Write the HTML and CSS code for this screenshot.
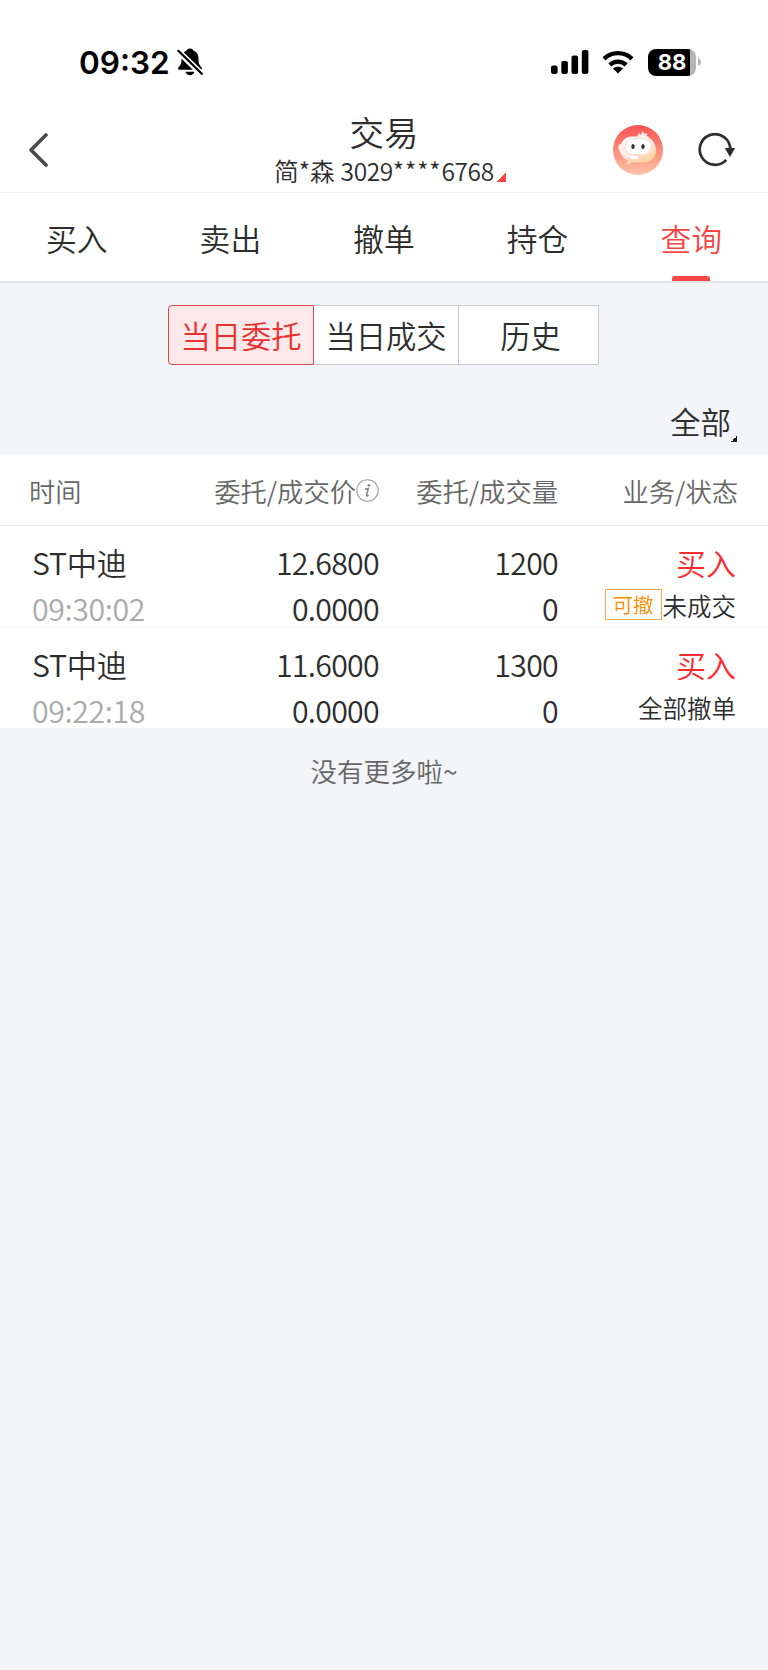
FILE: index.html
```html
<!DOCTYPE html>
<html lang="zh-CN">
<head>
  <meta charset="UTF-8" />
  <meta name="viewport" content="width=device-width, initial-scale=1.0"/>
  <title>交易</title>
  <link rel="stylesheet" href="styles.css">
</head>
<body>
  <div class="status-bar">
    <div class="clock">
      <span>09:32</span>
      <svg width="26" height="28" viewBox="0 0 26 28">
        <path d="M13 .5c1.800 0 3 .9 3.500 2.300 3.600 1.300 5 4.300 5 7.700 0 5 .8 6.500 3 8.800.8 1 .4 2.500-1 2.500H2.500c-1.400 0-1.800-1.500-1-2.500 2.200-2.300 3-3.800 3-8.800 0-3.400 1.400-6.400 5-7.700C10 1.400 11.200.5 13 .5z"/>
        <path d="M8.500 23.800h9c-.6 2.200-2.300 3.500-4.500 3.500s-3.900-1.300-4.500-3.500z"/>
        <path d="M.5 2.500L25 26.500" stroke="#fff" stroke-width="6"/>
        <path d="M1.300 2.800L24.800 25.800" stroke="#000" stroke-width="2.200" stroke-linecap="round"/>
      </svg>
    </div>
    <div class="signals">
      <svg class="bars" width="38" height="25" viewBox="0 0 38 25">
        <rect x="0" y="15.500" width="6.600" height="8.500" rx="2"/>
        <rect x="10.300" y="11" width="6.600" height="13" rx="2"/>
        <rect x="20.500" y="5.500" width="6.600" height="18.500" rx="2"/>
        <rect x="30.800" y="0" width="6.600" height="24" rx="2"/>
      </svg>
      <svg class="wifi" width="32" height="24" viewBox="0 0 32 24">
        <path d="M16 23.500l-5-5c2.800-2.500 7.200-2.500 10 0z"/>
        <path d="M7.800 14.800c4.700-4.300 11.700-4.300 16.400 0M2 8.800c7.900-7.600 20.100-7.600 28 0" fill="none" stroke="#000" stroke-width="4.400"/>
      </svg>
      <div class="battery"><span>88</span></div>
      <svg width="4" height="8" viewBox="0 0 4 8"><path d="M0 0c4 1.500 4 6.500 0 8z" fill="#b5b5b5"/></svg>
    </div>
  </div>

  <header class="header">
    <svg class="back" width="20" height="34" viewBox="0 0 20 34">
      <path d="M17 2L2 17l15 15" fill="none" stroke="#4a4a4a" stroke-width="3.600" stroke-linecap="round" stroke-linejoin="round"/>
    </svg>
    <div class="account">
      <h1>交易</h1>
      <div class="account-no">简*森 <span class="digits">3029<span class="stars">****</span>6768</span><i class="corner"></i></div>
    </div>
    <div class="actions">
      <svg width="50" height="50" viewBox="0 0 50 50">
        <defs>
          <linearGradient id="bg" x1="0" y1="0" x2="0" y2="1">
            <stop offset="0" stop-color="#f9524f"/>
            <stop offset="1" stop-color="#ffc3a8"/>
          </linearGradient>
          <linearGradient id="head" x1="0" y1="0" x2=".5" y2="1">
            <stop offset="0" stop-color="#fff"/>
            <stop offset=".6" stop-color="#ffe3da"/>
            <stop offset="1" stop-color="#ffd09a"/>
          </linearGradient>
        </defs>
        <circle cx="25" cy="25" r="25" fill="url(#bg)"/>
        <path d="M24 12l2-4 1.500 2L29.500 6l2 3 3-1-1 3 3 1-3 3z" fill="#ffe9e4"/>
        <path d="M18 11.500h14c7 1 11 7 11 14 0 8-5 12-12 12H20l-7 2.500 2-4.500c-5-2-7.500-6-8.500-10-2-2-1.500-6 1.500-6.500 1.500-4 5-7 10-7.500z" fill="url(#head)"/>
        <rect x="12" y="13.500" width="26" height="16" rx="8" fill="#fff" stroke="#ffe0d8"/>
        <ellipse cx="20" cy="21.500" rx="1.700" ry="2.600" fill="#33302f"/>
        <ellipse cx="30" cy="21.500" rx="1.700" ry="2.600" fill="#33302f"/>
        <path d="M8 25c2 4 6 6.500 14 7.500" fill="none" stroke="#fff" stroke-width="1.300"/>
        <rect x="18" y="31" width="7" height="3" rx="1.500" fill="#fff"/>
      </svg>
      <svg width="38" height="34" viewBox="0 0 38 34">
        <path d="M28.300 26.800A15.300 15.300 0 1 1 32.300 17" fill="none" stroke="#2d2d2d" stroke-width="2.700"/>
        <path d="M26.800 15h10.400l-5.200 9z" fill="#2d2d2d"/>
      </svg>
    </div>
  </header>

  <nav class="tabs">
    <a>买入</a>
    <a>卖出</a>
    <a>撤单</a>
    <a>持仓</a>
    <a class="active">查询</a>
  </nav>

  <div class="segments">
    <button class="selected">当日委托</button>
    <button>当日成交</button>
    <button>历史</button>
  </div>

  <div class="filter"><span>全部</span><i class="corner"></i></div>

  <div class="orders">
    <div class="order-head">
      <span>时间</span>
      <span class="price-head">委托/成交价<svg width="23" height="23" viewBox="0 0 23 23">
        <circle cx="11.500" cy="11.500" r="10.700" fill="none" stroke="#a0a0a0" stroke-width="1.100"/>
        <circle cx="12.800" cy="6.300" r="1.400" fill="#888"/>
        <path d="M9 10.300l3.300-.8-1.800 6.800c-.2.800.6.800 2.200-.5" fill="none" stroke="#888" stroke-width="1.600"/>
      </svg></span>
      <span>委托/成交量</span>
      <span>业务/状态</span>
    </div>

    <div class="order">
      <div class="cell">
        <div class="name">ST中迪</div>
        <div class="time">09:30:02</div>
      </div>
      <div class="cell"><div>12.6800</div><div>0.0000</div></div>
      <div class="cell"><div>1200</div><div>0</div></div>
      <div class="cell">
        <div class="side">买入</div>
        <div class="state"><span class="tag">可撤</span>未成交</div>
      </div>
    </div>

    <div class="order">
      <div class="cell">
        <div class="name">ST中迪</div>
        <div class="time">09:22:18</div>
      </div>
      <div class="cell"><div>11.6000</div><div>0.0000</div></div>
      <div class="cell"><div>1300</div><div>0</div></div>
      <div class="cell">
        <div class="side">买入</div>
        <div class="state">全部撤单</div>
      </div>
    </div>
  </div>

  <p class="no-more">没有更多啦~</p>
</body>
</html>
```
FILE: styles.css
```css
* {
  box-sizing: border-box;
}

body {
  margin: 0;
  min-height: 1670px;
  background-color: #f3f5f9;
  color: #2d2d2d;
  font-family: "Noto Sans CJK SC", sans-serif;
  font-weight: 350;
}

svg {
  display: block;
  flex: none;
}

.status-bar {
  display: flex;
  justify-content: space-between;
  height: 100px;
  padding: 48px 66px 0 79px;
  background-color: #fff;
}

.clock {
  display: flex;
  gap: 7px;
  height: 30px;
  color: #000;
  font: 600 31.5px/30px Inter, sans-serif;
}

.signals {
  display: flex;
  align-items: center;
  height: 28px;
}

.bars {
  margin-right: 13px;
}

.wifi {
  margin-right: 14px;
}

.battery {
  width: 48px;
  height: 27px;
  margin-right: 2px;
  border-radius: 8px;
  background: linear-gradient(to right, #000 42px, #b5b5b5 42px);
  color: #fff;
  font: 700 22px/27px Inter, sans-serif;
  text-align: center;
}

.header {
  display: grid;
  grid-template-columns: 200px 1fr 200px;
  height: 93px;
  border-bottom: 1px solid #eeeff4;
  background-color: #fff;
}

.back {
  margin: 33px 0 0 29px;
}

.account {
  text-align: center;
}

.account h1 {
  margin: 11px 0 0;
  font-size: 34.5px;
  font-weight: 350;
  line-height: 40px;
}

.account-no {
  display: flex;
  justify-content: center;
  gap: 6px;
  margin-left: 12px;
  font-size: 24.5px;
  line-height: 39px;
  white-space: nowrap;
}

.digits {
  letter-spacing: -0.4px;
}

.stars {
  letter-spacing: 0.9px;
}

.account-no .corner {
  align-self: flex-end;
  width: 10px;
  height: 10px;
  margin: 0 0 8px -4px;
  background: linear-gradient(135deg, transparent 50%, #fa4545 50%);
}

.actions {
  display: flex;
  align-items: center;
  gap: 35px;
  height: 50px;
  margin: 25px 0 0 45px;
}

.tabs {
  display: flex;
  height: 90px;
  border-bottom: 2px solid #e3e4ec;
  background-color: #fff;
}

.tabs a {
  display: flex;
  flex: 1;
  flex-direction: column;
  align-items: center;
  justify-content: space-between;
  padding-top: 25px;
  font-size: 30.8px;
  line-height: 40px;
}

.tabs .active {
  color: #fa4545;
}

.tabs .active::after {
  content: "";
  width: 38px;
  height: 5px;
  border-radius: 3px 3px 0 0;
  background-color: #fa4545;
}

.segments {
  display: flex;
  width: 431px;
  height: 60px;
  margin: 22px 0 0 168px;
}

.segments button {
  width: 145px;
  padding: 0;
  border: 1px solid #c9cacd;
  border-left: 0;
  background-color: #fff;
  color: inherit;
  font: inherit;
  font-size: 30.3px;
}

.segments button:last-child {
  width: 140px;
  padding-left: 4px;
}

.segments .selected {
  width: 146px;
  border: 1px solid #e0484c;
  border-radius: 4px 0 0 4px;
  background-color: #fde9ea;
  color: #e8302f;
}

.filter {
  display: flex;
  justify-content: flex-end;
  align-items: flex-end;
  height: 89px;
  padding: 0 31px 12px 0;
  font-size: 30.5px;
  line-height: 40px;
}

.filter span {
  margin-bottom: 1px;
}

.filter .corner {
  width: 6px;
  height: 6px;
  background: linear-gradient(135deg, transparent 50%, #1c1c1c 50%);
}

.order-head,
.order {
  display: grid;
  grid-template-columns: 160px 187px 179px 178px;
  padding-left: 32px;
  background-color: #fff;
}

.order-head {
  height: 72px;
  border-bottom: 1px solid #e3e3ed;
  color: #666;
  font-size: 26.3px;
  line-height: 73px;
  text-align: right;
}

.order-head span:first-child {
  margin-left: -3px;
  text-align: left;
}

.order-head span:last-child {
  margin-right: -2px;
}

.price-head {
  display: flex;
  justify-content: flex-end;
  align-items: center;
}

.order {
  height: 102px;
  border-bottom: 1px solid #f1f1f4;
  font-size: 30.3px;
  letter-spacing: -0.7px;
  text-align: right;
}

.order:last-child {
  height: 101px;
}

.cell {
  padding-top: 13px;
  line-height: 46px;
}

.cell:first-child {
  text-align: left;
}

.name {
  letter-spacing: -0.3px;
}

.time {
  color: #aaa;
  letter-spacing: -0.4px;
}

.side {
  color: #fd2b2e;
  font-size: 30px;
  letter-spacing: 0;
}

.state {
  display: flex;
  justify-content: flex-end;
  align-items: center;
  height: 41px;
  font-size: 24.5px;
  letter-spacing: 0;
}

.tag {
  width: 57px;
  height: 31px;
  margin: -3px 1px 0 0;
  border: 1px solid #fbaa4c;
  color: #ff8b00;
  font-size: 20.5px;
  line-height: 28px;
  text-align: center;
}

.no-more {
  margin: 22px 0 0;
  color: #666;
  font-size: 26.5px;
  line-height: 40px;
  text-align: center;
}
```
